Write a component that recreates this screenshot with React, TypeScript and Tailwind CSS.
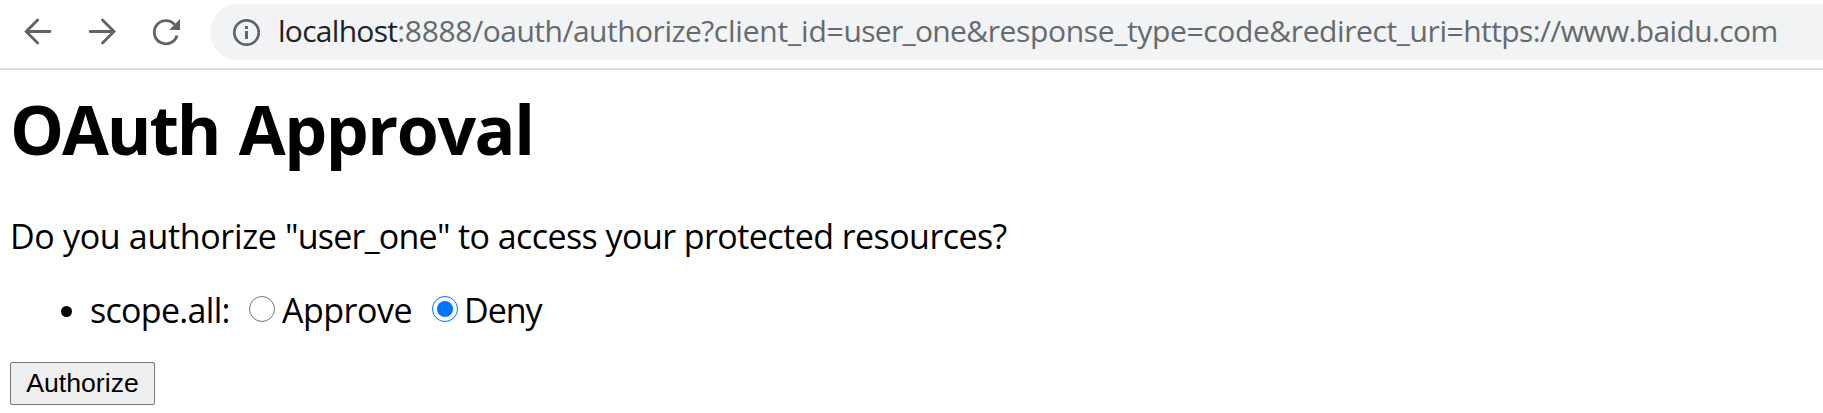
import { useState } from "react";

function Toolbar() {
  return (
    <header className="flex h-[70px] items-start border-b-2 border-[#dadce0] bg-white pt-1">
      <svg className="h-14 w-[210px] shrink-0" viewBox="0 4 210 56" fill="none" stroke="#5f6368" strokeWidth="2.8">
        <path d="M50 31.500H27M37.700 20L26.200 31.500L37.700 43" strokeLinecap="round" />
        <path d="M90.200 31.500H114M102.500 20L114 31.500L102.500 43" strokeLinecap="round" />
        <path d="M177 35.500A11.600 11.600 0 1 1 174.500 24.500" />
        <path d="M180 19V30H169.200Z" fill="#5f6368" stroke="none" />
      </svg>
      <div className="flex h-14 flex-1 items-center rounded-l-full bg-[#f1f3f4] pl-[22px]">
        <svg className="h-7 w-7 shrink-0" viewBox="0 0 28 28" fill="none" stroke="#5f6368" strokeWidth="2.7">
          <circle cx="14.500" cy="14.500" r="12.200" />
          <path d="M14.500 13V21M14.500 8V11" strokeWidth="2.900" />
        </svg>
        <span className="-mt-[3px] ml-[18px] whitespace-nowrap text-[30px] leading-10 text-[#666a6d]">
          <span className="tracking-[-0.72px] text-[#202124]">localhost</span>
          <span className="tracking-[-0.3px]">:8888</span>
          <span className="tracking-[-0.5px]">/oauth/authorize?</span>
          <span className="tracking-[-0.2px]">client_id=</span>
          <span className="tracking-[-0.7px]">user_one</span>
          <span className="tracking-[-0.35px]">&amp;response_type=</span>
          <span className="tracking-[-0.4px]">code&amp;redirect_uri=</span>
          <span className="tracking-[-0.62px]">https://www.baidu.com</span>
        </span>
      </div>
    </header>
  );
}

type RadioProps = { checked: boolean; onSelect: () => void; children: React.ReactNode };

function Radio({ checked, onSelect, children }: RadioProps) {
  return (
    <label className="flex items-center">
      <input type="radio" name="scope.all" checked={checked} onChange={onSelect} className="sr-only" />
      <span className={`mb-0.5 flex size-[26px] items-center justify-center rounded-full border bg-white ${checked ? "border-[#0075ff]" : "border-[#767676]"}`}>
        {checked && <span className="size-4 rounded-full bg-[#0075ff]" />}
      </span>
      {children}
    </label>
  );
}

export default function App() {
  const [approved, setApproved] = useState(false);
  return (
    <div className="h-[413px] overflow-hidden bg-white font-['Open_Sans','Noto_Sans',sans-serif] text-black">
      <Toolbar />
      <main className="pl-[10px] text-[34px] leading-[44px]">
        <h1 className="pt-[14px] text-[68px] font-bold leading-[90px] tracking-[-1.45px] [word-spacing:3px]">
          <span className="tracking-[-2.1px]">OAuth</span> Approval
        </h1>
        <form onSubmit={(e) => e.preventDefault()}>
          <p className="pt-10 tracking-[-0.56px]">
            <span className="tracking-[-0.33px]">Do you authorize </span>
            <span className="tracking-[-0.78px]">"user_one"</span> to access your protected resources?
          </p>
          <ul className="pt-[30px]">
            <li className="flex items-center pl-[51px]">
              <span className="mt-0.5 size-[11px] rounded-full bg-black" />
              <span className="ml-[18px] w-[159px] tracking-[-0.7px]">scope.all:</span>
              <Radio checked={approved} onSelect={() => setApproved(true)}>
                <span className="ml-[7px] w-[150px] tracking-[-0.5px]">Approve</span>
              </Radio>
              <Radio checked={!approved} onSelect={() => setApproved(false)}>
                <span className="ml-1.5 tracking-[-1px]">Deny</span>
              </Radio>
            </li>
          </ul>
          <button className="mt-[30px] flex h-[43px] w-[145px] items-center justify-center rounded-[2px] border border-[#767676] bg-[#efefef] pb-0.5 font-['Liberation_Sans',sans-serif] text-[26.67px]">
            Authorize
          </button>
        </form>
      </main>
    </div>
  );
}
